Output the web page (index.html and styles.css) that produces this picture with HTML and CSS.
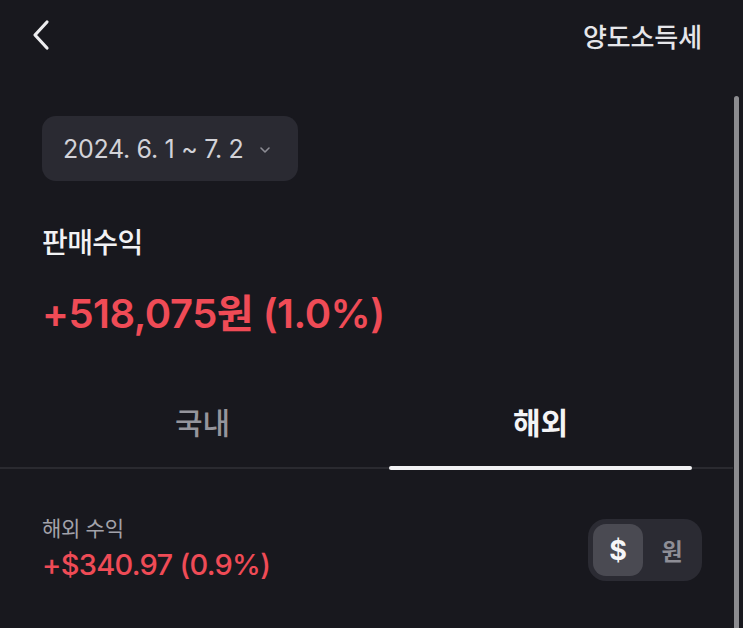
FILE: index.html
```html
<!DOCTYPE html>
<html lang="ko">
<head>
<meta charset="utf-8">
<link rel="stylesheet" href="styles.css">
</head>
<body>
<div class="screen">
  <header class="topbar">
    <svg class="back" width="18" height="32" viewBox="0 0 18 32"><path d="M15 3 L3 16 L15 29" fill="none" stroke="#ececef" stroke-width="3.2" stroke-linecap="round" stroke-linejoin="round"/></svg>
    <span class="title">양도소득세</span>
  </header>
  <main class="content">
    <div class="date-pill">
      <span class="date-text">2024. 6. 1 ~ 7. 2</span>
      <svg class="chev" width="12" height="8" viewBox="0 0 12 8"><path d="M2 2 L6 6 L10 2" fill="none" stroke="#8c8c94" stroke-width="1.6" stroke-linecap="round" stroke-linejoin="round"/></svg>
    </div>
    <div class="label">판매수익</div>
    <div class="amount">+518,075원 (1.0%)</div>
  </main>
  <nav class="tabs">
    <div class="tab">국내</div>
    <div class="tab active">해외</div>
  </nav>
  <section class="overseas">
    <div class="ov-left">
      <div class="ov-label">해외 수익</div>
      <div class="ov-amount">+$340.97 (0.9%)</div>
    </div>
    <div class="toggle">
      <span class="opt selected">$</span>
      <span class="opt">원</span>
    </div>
  </section>
  <div class="scrollbar"></div>
</div>
</body>
</html>
```
FILE: styles.css
```css
* { box-sizing: border-box; }
html, body { margin: 0; padding: 0; }
body {
  background: #18181e;
  font-family: "Inter", "Noto Sans CJK KR", sans-serif;
  color: #ececef;
  width: 743px;
  height: 628px;
  overflow: hidden;
}
.screen { position: relative; width: 743px; height: 628px; }
.topbar {
  display: flex;
  justify-content: space-between;
  align-items: center;
  height: 72px;
  padding: 0 41px 0 32px;
}
.back { display: block; margin-top: -2px; }
.title {
  font-family: "Noto Sans CJK KR", sans-serif;
  font-size: 26px;
  font-weight: 500;
  color: #e6e6ea;
  letter-spacing: -0.1px;
  margin-top: -1px;
}
.content { padding: 44px 0 0 42px; }
.date-pill {
  display: inline-flex;
  align-items: center;
  gap: 16px;
  height: 65px;
  padding: 0 27px 0 21px;
  background: #2a2a32;
  border-radius: 14px;
}
.date-text {
  font-size: 25px;
  color: #d2d2d8;
  letter-spacing: -0.3px;
}
.chev { margin-top: 2px; }
.label {
  font-family: "Noto Sans CJK KR", sans-serif;
  margin-top: 42px;
  font-size: 28px;
  font-weight: 500;
  color: #f2f2f4;
  line-height: 36px;
  letter-spacing: -0.6px;
}
.amount {
  margin-top: 31px;
  font-size: 40px;
  font-weight: 600;
  color: #ef4b56;
  line-height: 48px;
  letter-spacing: -0.5px;
}
.tabs {
  display: grid;
  grid-template-columns: 1fr 1fr;
  column-gap: 35px;
  padding: 0 41px 0 51px;
  margin: 59px 10px 0 0;
  border-bottom: 2px solid #2a2a30;
}
.tab {
  font-family: "Noto Sans CJK KR", sans-serif;
  text-align: center;
  font-size: 30px;
  font-weight: 500;
  color: #95959c;
  height: 70px;
  padding-top: 6px;
  line-height: 36px;
  position: relative;
}
.tab.active { color: #f4f4f6; font-weight: 700; }
.tab.active::after {
  content: "";
  position: absolute;
  left: 0; right: 0;
  bottom: -3px;
  height: 4px;
  border-radius: 2px;
  background: #f2f2f4;
}
.overseas {
  display: flex;
  justify-content: space-between;
  align-items: center;
  padding: 44px 41px 0 42px;
}
.ov-label {
  font-family: "Noto Sans CJK KR", sans-serif;
  font-size: 21px;
  color: #a2a2aa;
  line-height: 28px;
  letter-spacing: -0.3px;
}
.ov-amount {
  margin-top: 6px;
  font-size: 29px;
  font-weight: 500;
  color: #ef4b56;
  line-height: 36px;
  letter-spacing: -0.7px;
}
.toggle {
  display: flex;
  align-items: center;
  gap: 4px;
  width: 114px;
  height: 62px;
  padding: 5px;
  background: #2b2b33;
  border-radius: 18px;
  margin-top: 4px;
}
.opt {
  font-family: "Noto Sans CJK KR", sans-serif;
  width: 51px;
  height: 52px;
  display: flex;
  align-items: center;
  justify-content: center;
  font-size: 23px;
  font-weight: 600;
  color: #8e8e96;
  border-radius: 13px;
}
.opt.selected {
  background: #4a4a52;
  color: #f6f6f8;
  font-family: "Inter", sans-serif;
  font-size: 27px;
  font-weight: 700;
}
.scrollbar {
  position: absolute;
  left: 734px;
  top: 96px;
  width: 5px;
  height: 540px;
  border-radius: 3px;
  background: #8c8c90;
}
```
